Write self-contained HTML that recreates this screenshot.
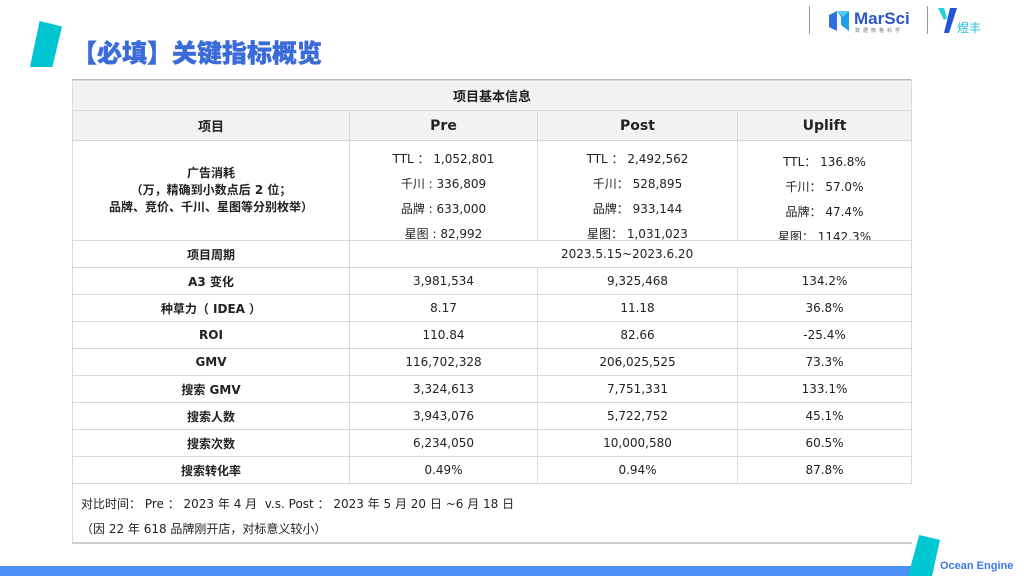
<!DOCTYPE html>
<html><head><meta charset="utf-8"><style>
*{margin:0;padding:0;box-sizing:border-box}
body{width:1024px;height:576px;overflow:hidden;background:#fff;position:relative;font-family:"DejaVu Sans","Liberation Sans","Noto Sans CJK SC",sans-serif;color:#222}
.abs{position:absolute}
table{position:absolute;left:72px;top:80px;width:839px;border-collapse:collapse;table-layout:fixed;font-size:12px}
td{border:1px solid #d9d9d9;text-align:center;height:27px;padding:0;vertical-align:middle;overflow:hidden}
td.b{font-weight:bold;font-family:"DejaVu Sans","Noto Sans CJK SC",sans-serif}
tr.h td{background:#f2f2f2;height:30px;font-weight:bold;font-size:14px}
.ad{height:99px;overflow:hidden;line-height:25px;padding-top:6px}
</style></head><body>
<div class="abs" style="left:30px;top:21px;width:32px;height:46px;background:#00c5d0;clip-path:polygon(30% 0,100% 12%,70% 100%,0 100%)"></div>
<div class="abs" style="left:72px;top:35px;font-size:25px;font-weight:900;color:#3a6bd8;font-family:'Noto Sans CJK SC',sans-serif;line-height:34px;-webkit-text-stroke:0.4px #3a6bd8">【必填】关键指标概览</div>
<div class="abs" style="left:72px;top:79px;width:839px;height:1px;background:#bbb"></div>

<div class="abs" style="left:809px;top:6px;width:1px;height:28px;background:#999"></div>
<svg class="abs" style="left:827px;top:9px" width="24" height="24" viewBox="0 0 24 24"><polygon points="2,6 10,2 10,22 2,18" fill="#2f6fe0"/><polygon points="10,2 22,2 22,22 14,16 14,8" fill="#1aa0e8"/><polygon points="10,2 22,2 16,8" fill="#4fd0f0"/></svg>
<div class="abs" style="left:854px;top:9px;font-size:17px;font-weight:bold;color:#2b58c6;font-family:'Liberation Sans',sans-serif">MarSci</div>
<div class="abs" style="left:855px;top:27px;font-size:5px;color:#777;letter-spacing:3px;font-family:'Noto Sans CJK SC',sans-serif">数据微格科学</div>
<div class="abs" style="left:927px;top:6px;width:1px;height:28px;background:#999"></div>
<svg class="abs" style="left:938px;top:6px" width="20" height="28" viewBox="0 0 20 28"><polygon points="0,2 6,2 9,12 6,14" fill="#1fd2d8"/><polygon points="12,2 19,2 11,27 6,27" fill="#2454d8"/></svg>
<div class="abs" style="left:957px;top:19px;font-size:12px;color:#1fc0d8;font-family:'Noto Sans CJK SC',sans-serif">煜丰</div>

<table>
<colgroup><col style="width:277px"><col style="width:188px"><col style="width:200px"><col style="width:174px"></colgroup>
<tr class="h"><td colspan="4" style="font-size:13px">项目基本信息</td></tr>
<tr class="h"><td style="font-size:13px">项目</td><td>Pre</td><td>Post</td><td>Uplift</td></tr>
<tr><td class="b" style="height:100px;font-size:12px;line-height:17px">广告消耗<br>（万，精确到小数点后 2 位；<br>品牌、竞价、千川、星图等分别枚举）</td>
<td style="height:100px;vertical-align:top"><div class="ad">TTL ： 1,052,801<br>千川 : 336,809<br>品牌 : 633,000<br>星图 : 82,992</div></td>
<td style="vertical-align:top"><div class="ad">TTL ： 2,492,562<br>千川： 528,895<br>品牌： 933,144<br>星图： 1,031,023</div></td>
<td style="vertical-align:top"><div class="ad" style="padding-top:9px">TTL： 136.8%<br>千川： 57.0%<br>品牌： 47.4%<br>星图： 1142.3%</div></td></tr>
<tr><td class="b">项目周期</td><td colspan="3" style="text-align:left;padding-left:211px">2023.5.15~2023.6.20</td></tr>
<tr><td class="b">A3 变化</td><td>3,981,534</td><td>9,325,468</td><td>134.2%</td></tr>
<tr><td class="b">种草力（ IDEA ）</td><td>8.17</td><td>11.18</td><td>36.8%</td></tr>
<tr><td class="b">ROI</td><td>110.84</td><td>82.66</td><td>-25.4%</td></tr>
<tr><td class="b">GMV</td><td>116,702,328</td><td>206,025,525</td><td>73.3%</td></tr>
<tr><td class="b">搜索 GMV</td><td>3,324,613</td><td>7,751,331</td><td>133.1%</td></tr>
<tr><td class="b">搜索人数</td><td>3,943,076</td><td>5,722,752</td><td>45.1%</td></tr>
<tr><td class="b">搜索次数</td><td>6,234,050</td><td>10,000,580</td><td>60.5%</td></tr>
<tr><td class="b">搜索转化率</td><td>0.49%</td><td>0.94%</td><td>87.8%</td></tr>
<tr><td colspan="4" style="height:58px;text-align:left;padding-left:8px;padding-top:8px;line-height:25px;border-bottom:2px solid #ccc;border-right:none">对比时间： Pre ： 2023 年 4 月&nbsp; v.s. Post ： 2023 年 5 月 20 日 ~6 月 18 日<br>（因 22 年 618 品牌刚开店，对标意义较小）</td></tr>
</table>

<div class="abs" style="left:0;top:566px;width:912px;height:10px;background:#4a90f5"></div>
<div class="abs" style="left:908px;top:535px;width:32px;height:41px;background:#00c8d2;clip-path:polygon(35% 0,100% 12%,75% 100%,0 100%)"></div>
<div class="abs" style="left:940px;top:560px;font-size:11px;font-weight:bold;color:#3a7ae8;font-family:'Liberation Sans',sans-serif">Ocean Engine</div>
</body></html>
